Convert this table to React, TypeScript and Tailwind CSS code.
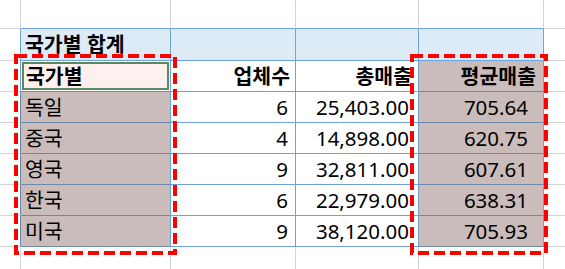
import React from 'react';

type Row = { country: string; count: number; total: string; avg: string };

const rows: Row[] = [
  { country: '독일', count: 6, total: '25,403.00', avg: '705.64' },
  { country: '중국', count: 4, total: '14,898.00', avg: '620.75' },
  { country: '영국', count: 9, total: '32,811.00', avg: '607.61' },
  { country: '한국', count: 6, total: '22,979.00', avg: '638.31' },
  { country: '미국', count: 9, total: '38,120.00', avg: '705.93' },
];

const font = { fontFamily: '"Noto Sans", "Noto Sans CJK KR", sans-serif' };

function App() {
  return (
    <div className="relative w-[565px] h-[269px] bg-white overflow-hidden text-black" style={font}>
      <div className="grid h-full grid-cols-[21px_150px_125px_123px_125px_1fr] grid-rows-[29px_32px_31px_31px_31px_31px_31px_31px_1fr] text-[20.5px] leading-none">
        {/* top empty row */}
        <div className="border-r border-b border-[#d4d4d4]" />
        <div className="border-r border-b border-r-[#d4d4d4] border-b-[#6fa3d8]" />
        <div className="border-r border-b border-r-[#d4d4d4] border-b-[#6fa3d8]" />
        <div className="border-r border-b border-r-[#d4d4d4] border-b-[#6fa3d8]" />
        <div className="border-r border-b border-r-[#d4d4d4] border-b-[#6fa3d8]" />
        <div className="border-b border-[#d4d4d4]" />

        {/* 국가별 합계 */}
        <div className="border-r border-b border-r-[#6fa3d8] border-b-[#d4d4d4]" />
        <div className="flex items-center pl-[4px] font-bold bg-[#ddebf7] border-r border-b border-[#6fa3d8]">국가별 합계</div>
        <div className="bg-[#ddebf7] border-r border-b border-[#6fa3d8]" />
        <div className="bg-[#ddebf7] border-r border-b border-[#6fa3d8]" />
        <div className="bg-[#ddebf7] border-r border-b border-[#6fa3d8]" />
        <div className="border-b border-[#d4d4d4]" />

        {/* header */}
        <div className="border-r border-b border-r-[#6fa3d8] border-b-[#d4d4d4]" />
        <div className="border-r border-b border-r-[#6fa3d8] border-b-[#6f88a8] p-px">
          <div className="h-full flex items-center pl-[2px] font-bold bg-[#fff0f0] border-2 border-[#5b8a5e]">국가별</div>
        </div>
        <div className="flex items-center justify-end pr-[5px] font-bold border-r border-b border-[#6fa3d8]">업체수</div>
        <div className="flex items-center justify-end pr-[6px] font-bold border-r border-b border-[#6fa3d8]">총매출</div>
        <div className="flex items-center justify-end pr-[7px] font-bold bg-[#c9bcbb] border-r border-b border-r-[#6fa3d8] border-b-[#6f88a8]">평균매출</div>
        <div className="border-b border-[#d4d4d4]" />

        {rows.map((r) => (
          <React.Fragment key={r.country}>
            <div className="border-r border-b border-r-[#6f88a8] border-b-[#d4d4d4]" />
            <div className="flex items-center pl-[4px] bg-[#c9bcbb] border-r border-b border-r-[#6fa3d8] border-b-[#6f88a8]">{r.country}</div>
            <div className="flex items-center justify-end pr-[7px] border-r border-b border-[#6fa3d8]">{r.count}</div>
            <div className="flex items-center justify-end pr-[9px] border-r border-b border-[#6fa3d8]">{r.total}</div>
            <div className="flex items-center justify-end pr-[15px] bg-[#c9bcbb] border-r border-b border-r-[#6fa3d8] border-b-[#6f88a8]">{r.avg}</div>
            <div className="border-b border-[#d4d4d4]" />
          </React.Fragment>
        ))}

        {/* bottom empty row */}
        <div className="border-r border-[#d4d4d4]" />
        <div className="border-r border-[#d4d4d4]" />
        <div className="border-r border-[#d4d4d4]" />
        <div className="border-r border-[#d4d4d4]" />
        <div className="border-r border-[#d4d4d4]" />
        <div />
      </div>

      {/* dashed highlight boxes */}
      <svg className="absolute inset-0 pointer-events-none" width="565" height="269">
        <rect x="16" y="56" width="159" height="197" fill="none" stroke="#ff0000" strokeWidth="4" strokeDasharray="11 5" />
        <rect x="412" y="56" width="134" height="197" fill="none" stroke="#ff0000" strokeWidth="4" strokeDasharray="11 5" />
      </svg>
    </div>
  );
}

export default App;
